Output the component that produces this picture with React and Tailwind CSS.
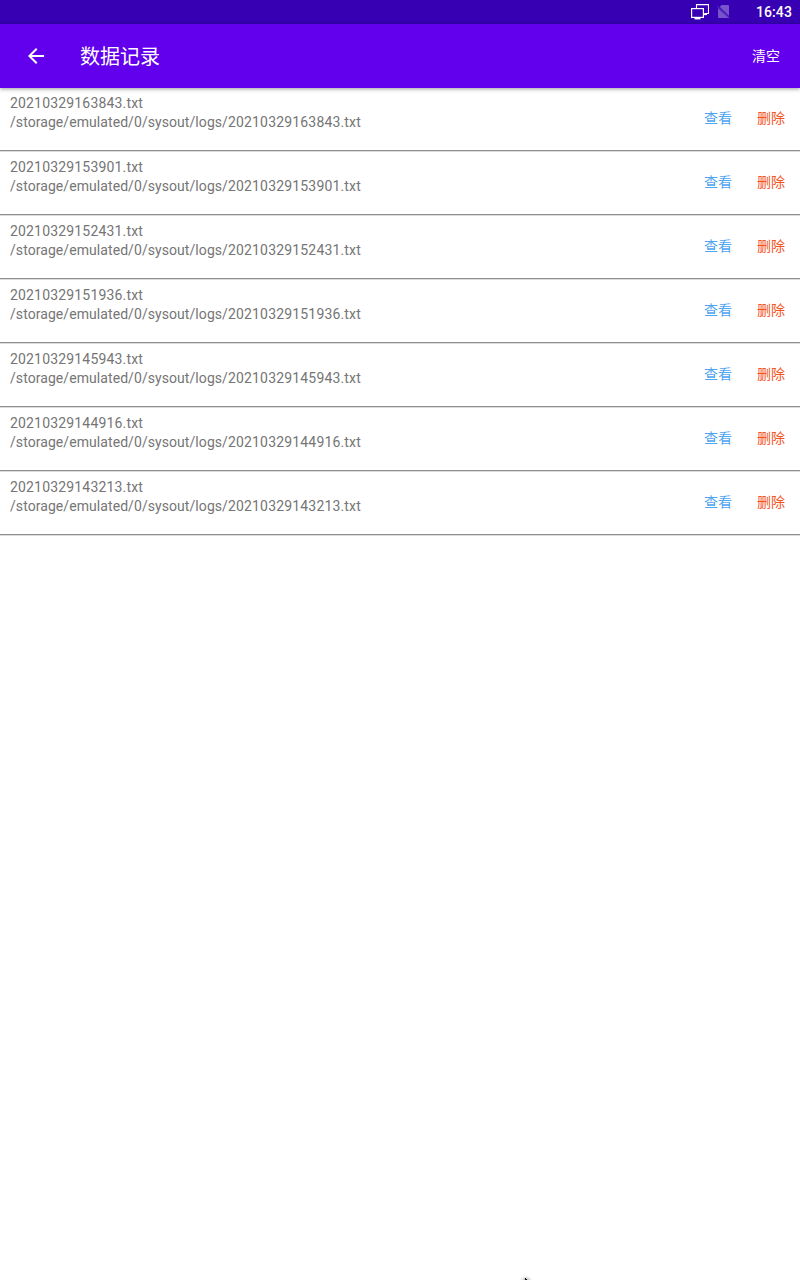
const files = [
  '20210329163843.txt',
  '20210329153901.txt',
  '20210329152431.txt',
  '20210329151936.txt',
  '20210329145943.txt',
  '20210329144916.txt',
  '20210329143213.txt',
];

function StatusBar() {
  return (
    <div className="flex h-6 items-center justify-end bg-[#3700b3] pr-2 text-white">
      <svg className="mr-2 h-4 w-[18px]" viewBox="0 0 18 16" fill="none">
        <path d="M5.500 4V0.600h12v8.900h-4" stroke="#fff" strokeWidth="1.100" />
        <path d="M13 10.300h3" stroke="#fff" strokeWidth="1.600" />
        <rect x="0.6" y="4.6" width="11.8" height="8.800" stroke="#fff" strokeWidth="1.200" />
        <path d="M3.500 14.500h6" stroke="#fff" strokeWidth="1.800" />
      </svg>
      <svg className="mr-[26px] h-4 w-[13px]" viewBox="0 0 13 16" fill="#fff" fillOpacity="0.33">
        <path d="M4.600 1H11q1 0 1 1v10L2.800 3z" />
        <path d="M1 4.300L11.500 14H2q-1 0-1-1z" />
        <path d="M0 2.600l0.700-0.700 12 11.800-0.700 0.700z" fillOpacity="0.2" />
      </svg>
      <span className="text-sm font-medium tracking-[0.1px]">16:43</span>
    </div>
  );
}

function FileRow({ name }) {
  return (
    <li className="flex h-16 items-start justify-between border-b border-[#dcdcdc]">
      <div className="flex h-[63px] w-full justify-between border-b border-[#8f8f8f]">
        <div className="pt-[6px] pl-[10px] text-sm leading-[19px] text-[#757575]">
          <p className="tracking-[0.17px]">{name}</p>
          <p className="tracking-[0.07px]">
            /storage/emulated/0/sysout/logs/<span className="tracking-[0.17px]">{name}</span>
          </p>
        </div>
        <div className="flex h-[60px] items-center gap-[25px] pr-[15px] text-sm">
          <button className="text-[#4ea5f0]">查看</button>
          <button className="text-[#f4511e]">删除</button>
        </div>
      </div>
    </li>
  );
}

export default function App() {
  return (
    <div className="relative h-[1280px] w-[800px] overflow-hidden bg-white font-[Roboto,'Noto_Sans_CJK_SC',sans-serif]">
      <StatusBar />
      <header className="relative flex h-16 items-center bg-[#6200ee] pr-5 pl-6 text-white shadow-[0_1px_4px_rgba(0,0,0,0.4)]">
        <svg className="h-6 w-6" viewBox="0 0 24 24" fill="#fff">
          <path d="M20 11H7.830l5.590-5.590L12 4l-8 8 8 8 1.410-1.410L7.830 13H20v-2z" />
        </svg>
        <h1 className="ml-8 pt-0.5 text-xl">数据记录</h1>
        <button className="ml-auto text-sm">清空</button>
      </header>
      <ul>
        {files.map((name) => (
          <FileRow key={name} name={name} />
        ))}
      </ul>
      <svg className="absolute bottom-0 left-[518px] h-[6px] w-4" viewBox="0 0 16 6">
        <ellipse cx="8" cy="6" rx="6" ry="4" fill="#000" fillOpacity="0.06" />
        <ellipse cx="8" cy="6" rx="3.500" ry="2.500" fill="#000" fillOpacity="0.12" />
        <path d="M7 4h1v1h1v1H7z" fill="#111" />
      </svg>
    </div>
  );
}
